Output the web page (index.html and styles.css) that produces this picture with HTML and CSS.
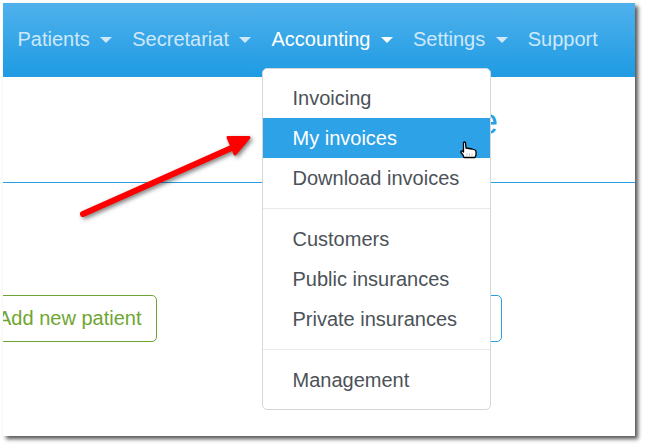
FILE: index.html
```html
<html>
<head>
	<meta charset="UTF-8">
	<title>Accounting menu</title>
	<link rel="stylesheet" href="styles.css">
</head>
<body>
	<div class="screen">
		<nav class="navbar">
			<a class="nav-link">Patients<span class="caret"></span></a>
			<a class="nav-link">Secretariat<span class="caret"></span></a>
			<a class="nav-link active">Accounting<span class="caret"></span></a>
			<a class="nav-link">Settings<span class="caret"></span></a>
			<a class="nav-link">Support</a>
		</nav>
		<div class="content">
			<div class="title-row">
				<h1 class="title">Home</h1>
			</div>
			<div class="button-row">
				<a class="btn btn-green">Add new patient</a>
				<a class="btn btn-blue"></a>
			</div>
		</div>
		<ul class="dropdown">
			<li class="item">Invoicing</li>
			<li class="item selected">My invoices</li>
			<li class="item">Download invoices</li>
			<li class="divider"></li>
			<li class="item">Customers</li>
			<li class="item">Public insurances</li>
			<li class="item">Private insurances</li>
			<li class="divider"></li>
			<li class="item">Management</li>
		</ul>
	</div>
	<svg class="arrow" width="646" height="447" viewBox="0 0 646 447">
		<path d="M83 214 L236 146" fill="none" stroke="#f00" stroke-width="6" stroke-linecap="round"/>
		<path d="M228 137.500 L249 137.500 L235 154 Z" fill="#f00" stroke="#f00" stroke-width="3" stroke-linejoin="round"/>
	</svg>
	<svg class="cursor" width="18" height="18" viewBox="0 0 18 18">
		<path d="M3.500 1.500 Q4.500 0.500 5.500 1.500 L6 7 L9 7.500 L12 8 L15 9 Q16 9.500 16 11 L16 14 L15 16.500 L4 16.500 L3 14 L1 11.500 Q0.500 9.500 2.500 10 L3.500 11 Z" fill="#fff" stroke="#000" stroke-width="1.300" stroke-linejoin="round"/>
		<path d="M7 12.500 V15 M9.500 12.500 V15 M12 12.500 V15" stroke="#888" stroke-width="0.800" stroke-dasharray="1 1"/>
	</svg>
</body>
</html>
```

FILE: styles.css
```css
body {
	margin: 0;
	width: 646px;
	height: 447px;
	overflow: hidden;
	background: #fff;
	font-family: "Liberation Sans", Arial, sans-serif;
	font-size: 20px;
}
.screen {
	position: relative;
	width: 632px;
	height: 433px;
	margin: 3px 0 0 3px;
	background: #fff;
	box-shadow: 3px 3px 4px #555;
}
.navbar {
	display: flex;
	height: 74px;
	padding-left: 14.5px;
	gap: 20px;
	align-items: center;
	box-sizing: border-box;
	padding-bottom: 2px;
	background: linear-gradient(#4fb1ec, #1e9be3);
}
.nav-link {
	color: #cfe8fa;
	line-height: 28px;
}
.nav-link.active {
	color: #fff;
}
.caret {
	display: inline-block;
	margin-left: 10.5px;
	vertical-align: 3px;
	border-top: 6px solid;
	border-left: 6px solid transparent;
	border-right: 6px solid transparent;
}
.content {
	overflow: hidden;
	height: 359px;
}
.title-row {
	height: 106px;
	box-sizing: border-box;
	border-bottom: 1px solid #2a9fe4;
	display: flex;
	justify-content: flex-end;
	padding-right: 137px;
}
.title {
	margin: 24px 0 0;
	font-size: 36px;
	font-weight: normal;
	color: #2a9fe4;
	line-height: 42px;
}
.button-row {
	display: flex;
	margin-top: 112px;
	margin-left: -21px;
}
.btn {
	box-sizing: border-box;
	height: 47px;
	line-height: 45px;
	padding: 0 15px;
	border: 1px solid;
	border-radius: 5px;
	white-space: nowrap;
}
.btn-green {
	color: #6fa532;
	border-color: #6fa532;
}
.btn-blue {
	border-color: #2a9fe4;
	margin-left: 150px;
	width: 195px;
}
.dropdown {
	position: absolute;
	left: 259px;
	top: 65px;
	width: 229px;
	box-sizing: border-box;
	margin: 0;
	padding: 9px 0;
	list-style: none;
	background: #fff;
	border: 1px solid #d6d6d6;
	border-radius: 5px;
}
.item {
	height: 40px;
	line-height: 40px;
	padding-left: 29.5px;
	color: #4c5258;
}
.item.selected {
	color: #fff;
	background: #2ea2e6;
}
.divider {
	height: 1px;
	margin: 10px 0;
	background: #e9e9e9;
}
.arrow {
	position: absolute;
	left: 0;
	top: 0;
	filter: drop-shadow(2px 2px 2px rgba(0, 0, 0, 0.5));
}
.cursor {
	position: absolute;
	left: 460px;
	top: 141px;
}
```
